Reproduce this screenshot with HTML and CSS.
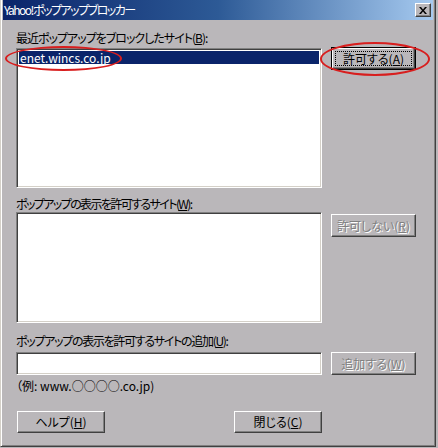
FILE: index.html
```html
<!DOCTYPE html>
<html lang="ja">
<head>
<meta charset="utf-8">
<title>Yahoo!ポップアップブロッカー</title>
<link rel="stylesheet" href="styles.css">
</head>
<body>
<div class="window">
  <div class="titlebar">
    <span class="title">Yahoo!ポップアップブロッカー</span>
    <span class="close"><svg width="8" height="7" viewBox="0 0 8 7"><path d="M0 0h2l2 2.5L6 0h2L5 3.5 8 7H6L4 4.5 2 7H0l3-3.5z" fill="#000"/></svg></span>
  </div>
  <div class="content">
    <div class="label l1">最近ポップアップをブロックしたサイト(<u>B</u>):</div>
    <div class="row row1">
      <div class="listbox lb1"><div class="item sel">enet.wincs.co.jp</div></div>
      <button class="btn default"><span class="focus">許可する(<u>A</u>)</span></button>
    </div>
    <div class="label l2">ポップアップの表示を許可するサイト(<u>W</u>):</div>
    <div class="row row2">
      <div class="listbox lb2"></div>
      <button class="btn disabled">許可しない(<u>R</u>)</button>
    </div>
    <div class="label l3">ポップアップの表示を許可するサイトの追加(<u>U</u>):</div>
    <div class="row row3">
      <div class="listbox input"></div>
      <button class="btn disabled">追加する(<u>W</u>)</button>
    </div>
    <div class="label example">（例: www.○○○○.co.jp)</div>
    <div class="footer">
      <button class="btn wide">ヘルプ(<u>H</u>)</button>
      <button class="btn wide">閉じる(<u>C</u>)</button>
    </div>
  </div>
  <div class="ellipse e1"></div>
  <div class="ellipse e2"></div>
</div>
</body>
</html>
```
FILE: styles.css
```css
html, body {
  margin: 0;
  padding: 0;
  background: #bab7ba;
}
body {
  font-family: "Noto Sans CJK JP", "Liberation Sans", sans-serif;
  font-size: 12px;
  font-feature-settings: "palt" 1;
  color: #000;
}
.window {
  position: relative;
  width: 436px;
  height: 447px;
  box-sizing: border-box;
  background: #bab7ba;
  border-left: 1px solid #d4d0c8;
  border-right: 1px solid #404040;
  border-bottom: 1px solid #404040;
  box-shadow: inset 1px 0 #ffffff, inset -1px -1px #808080;
  padding: 0 2px 0 2px;
  overflow: hidden;
}
.titlebar {
  height: 20px;
  display: flex;
  align-items: center;
  justify-content: space-between;
  background: linear-gradient(to right, #0a246a 0%, #2d5a96 50%, #a6caf0 100%);
  padding: 0 2px 0 1px;
}
.title {
  color: #fff;
  font-size: 12px;
  letter-spacing: -1.5px;
  line-height: 20px;
}
.close {
  width: 16px;
  height: 14px;
  box-sizing: border-box;
  background: #bab7ba;
  border: 1px solid;
  border-color: #fff #404040 #404040 #fff;
  box-shadow: inset -1px -1px #808080;
  display: flex;
  align-items: center;
  justify-content: center;
}
.content {
  padding-left: 13px;
}
.label {
  height: 14px;
  line-height: 14px;
  white-space: nowrap;
  letter-spacing: -1px;
}
.l1 { margin-top: 11px; }
.l2 { margin-top: 9px; letter-spacing: -1.6px; }
.l3 { margin-top: 11px; letter-spacing: -1.3px; }
.example { margin-top: 4px; letter-spacing: 0; }
.row {
  display: flex;
  align-items: flex-start;
  gap: 9px;
}
.row1 { margin-top: 3px; }
.row2 { margin-top: 1px; }
.row3 { margin-top: 4px; }
.listbox {
  width: 306px;
  box-sizing: border-box;
  background: #fff;
  border: 1px solid;
  border-color: #808080 #fff #fff #808080;
  box-shadow: inset 1px 1px #404040, inset -1px -1px #d4d0c8;
  padding: 2px 2px;
}
.lb1 { height: 140px; }
.lb2 { height: 111px; }
.input { height: 23px; }
.item {
  height: 13px;
  line-height: 13px;
  padding-left: 1px;
}
.sel {
  background: #0a246a;
  color: #fff;
}
.btn {
  width: 85px;
  height: 23px;
  box-sizing: border-box;
  margin: 0;
  padding: 0;
  background: #bab7ba;
  font: inherit;
  color: #000;
  border: 1px solid;
  border-color: #fff #404040 #404040 #fff;
  box-shadow: inset -1px -1px #808080;
  display: flex;
  align-items: center;
  justify-content: center;
  line-height: 14px;
}
.row1 .btn { margin-top: -1px; }
.row2 .btn { margin-top: 2px; }
.btn.default {
  border: 1px solid #000;
  box-shadow: inset 1px 1px #fff, inset -1px -1px #404040, inset -2px -2px #808080;
  padding: 3px;
}
.focus {
  flex: 1;
  align-self: stretch;
  display: flex;
  align-items: center;
  justify-content: center;
  border: 1px dotted #000;
}
.btn.disabled {
  color: #808080;
  text-shadow: 1px 1px #fff;
}
.footer {
  margin-top: 18px;
  width: 306px;
  display: flex;
  justify-content: space-between;
  padding-left: 1px;
  box-sizing: border-box;
}
.btn.wide {
  width: 88px;
  height: 22px;
}
.ellipse {
  position: absolute;
  border: 2px solid #d81e1e;
  border-radius: 50%;
  box-sizing: border-box;
  pointer-events: none;
}
.e1 { left: 4px; top: 46px; width: 117px; height: 25px; }
.e2 { left: 319px; top: 42px; width: 110px; height: 34px; }
```
